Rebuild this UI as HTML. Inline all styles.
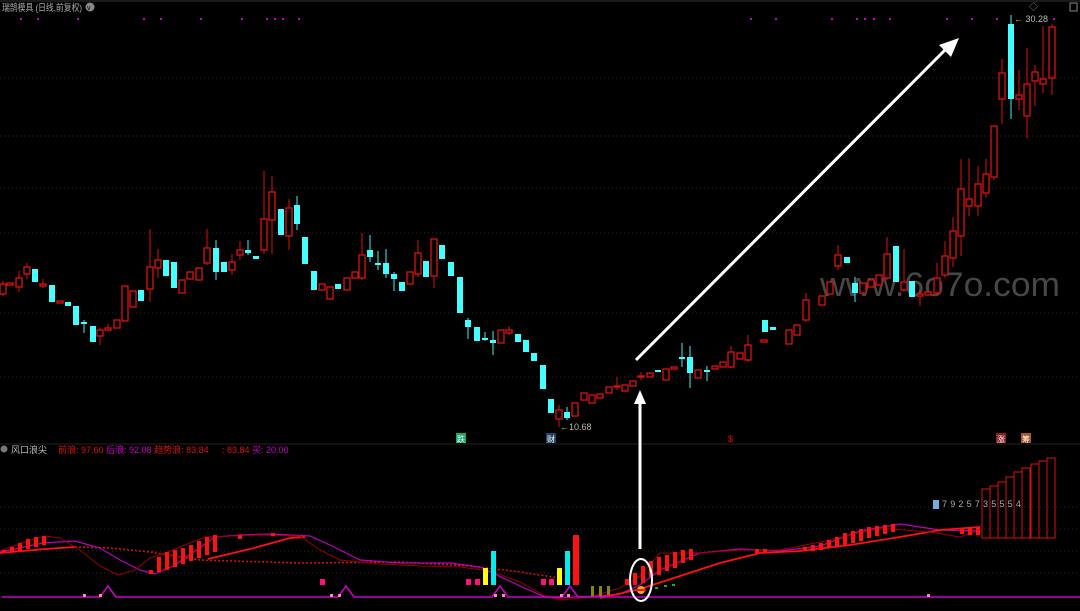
<!DOCTYPE html><html><head><meta charset="utf-8"><style>
body{margin:0;background:#000;width:1080px;height:611px;overflow:hidden;font-family:"Liberation Sans","Noto Sans CJK SC",sans-serif}
svg{position:absolute;left:0;top:0}
</style></head><body>
<svg width="1080" height="611" viewBox="0 0 1080 611">
<rect width="1080" height="611" fill="#000"/>
<line x1="0" y1="1" x2="1080" y2="1" stroke="#333"/>
<g stroke="#2a2a2a" stroke-dasharray="1,3">
<line x1="0" y1="78" x2="1080" y2="78"/><line x1="0" y1="136" x2="1080" y2="136"/><line x1="0" y1="188" x2="1080" y2="188"/><line x1="0" y1="233" x2="1080" y2="233"/><line x1="0" y1="313" x2="1080" y2="313"/><line x1="0" y1="377" x2="1080" y2="377"/>
<line x1="0" y1="507" x2="1080" y2="507"/><line x1="0" y1="529" x2="1080" y2="529"/><line x1="0" y1="551" x2="1080" y2="551"/><line x1="0" y1="573" x2="1080" y2="573"/>
</g>
<line x1="0" y1="444" x2="1080" y2="444" stroke="#222"/>
<text x="2" y="11" fill="#aaa" font-size="9.5" textLength="80" lengthAdjust="spacingAndGlyphs">瑞鹄模具 (日线,前复权)</text>
<circle cx="90" cy="7" r="4.5" fill="#888"/><text x="87" y="10" font-size="7" fill="#000">v</text>
<text x="1029" y="10" fill="#888" font-size="9">◇</text><rect x="1070" y="3" width="7" height="8" fill="none" stroke="#888"/>
<g fill="#c0c">
<rect x="20" y="18" width="2" height="2"/><rect x="37" y="18" width="2" height="2"/><rect x="77" y="18" width="2" height="2"/><rect x="143" y="18" width="2" height="2"/><rect x="160" y="18" width="2" height="2"/><rect x="200" y="18" width="2" height="2"/><rect x="241" y="18" width="2" height="2"/><rect x="266" y="18" width="2" height="2"/><rect x="274" y="18" width="2" height="2"/><rect x="282" y="18" width="2" height="2"/><rect x="298" y="18" width="2" height="2"/><rect x="750" y="18" width="2" height="2"/><rect x="775" y="18" width="2" height="2"/><rect x="831" y="18" width="2" height="2"/><rect x="856" y="18" width="2" height="2"/><rect x="864" y="18" width="2" height="2"/><rect x="873" y="18" width="2" height="2"/><rect x="889" y="18" width="2" height="2"/><rect x="946" y="18" width="2" height="2"/><rect x="971" y="18" width="2" height="2"/><rect x="996" y="18" width="2" height="2"/><rect x="1053" y="18" width="2" height="2"/>
</g>
<text x="820" y="296" fill="#474747" font-size="34" textLength="240" lengthAdjust="spacingAndGlyphs">www.6o7o.com</text>
<g stroke-width="1">
<g stroke="#d11">
<line x1="3" y1="281" x2="3" y2="296"/><line x1="19" y1="271" x2="19" y2="292"/><line x1="27" y1="263" x2="27" y2="279"/><line x1="43" y1="279" x2="43" y2="288"/><line x1="100" y1="328" x2="100" y2="345"/><line x1="108" y1="324" x2="108" y2="331"/><line x1="150" y1="229" x2="150" y2="302"/><line x1="158" y1="249" x2="158" y2="278"/><line x1="207" y1="229" x2="207" y2="265"/><line x1="232" y1="254" x2="232" y2="275"/><line x1="240" y1="241" x2="240" y2="260"/><line x1="264" y1="171" x2="264" y2="254"/><line x1="272" y1="176" x2="272" y2="254"/><line x1="289" y1="199" x2="289" y2="250"/><line x1="362" y1="233" x2="362" y2="280"/><line x1="418" y1="240" x2="418" y2="277"/><line x1="434" y1="239" x2="434" y2="288"/><line x1="509" y1="326" x2="509" y2="335"/><line x1="559" y1="405" x2="559" y2="427"/><line x1="617" y1="377" x2="617" y2="390"/><line x1="641" y1="372" x2="641" y2="380"/><line x1="731" y1="346" x2="731" y2="368"/><line x1="748" y1="335" x2="748" y2="362"/><line x1="806" y1="293" x2="806" y2="322"/><line x1="838" y1="245" x2="838" y2="270"/><line x1="887" y1="237" x2="887" y2="280"/><line x1="904" y1="249" x2="904" y2="292"/><line x1="920" y1="290" x2="920" y2="306"/><line x1="937" y1="263" x2="937" y2="296"/><line x1="945" y1="241" x2="945" y2="278"/><line x1="953" y1="217" x2="953" y2="267"/><line x1="961" y1="159" x2="961" y2="256"/><line x1="969" y1="158" x2="969" y2="216"/><line x1="978" y1="166" x2="978" y2="216"/><line x1="986" y1="159" x2="986" y2="198"/><line x1="994" y1="126" x2="994" y2="180"/><line x1="1002" y1="59" x2="1002" y2="124"/><line x1="1019" y1="70" x2="1019" y2="110"/><line x1="1027" y1="48" x2="1027" y2="138"/><line x1="1035" y1="65" x2="1035" y2="106"/><line x1="1043" y1="26" x2="1043" y2="93"/><line x1="1052" y1="24" x2="1052" y2="95"/>
</g>
<g stroke="#4ee">
<line x1="216" y1="240" x2="216" y2="280"/><line x1="248" y1="240" x2="248" y2="255"/><line x1="297" y1="196" x2="297" y2="230"/><line x1="370" y1="235" x2="370" y2="262"/><line x1="378" y1="251" x2="378" y2="270"/><line x1="386" y1="249" x2="386" y2="278"/><line x1="394" y1="272" x2="394" y2="291"/><line x1="468" y1="318" x2="468" y2="339"/><line x1="485" y1="332" x2="485" y2="341"/><line x1="493" y1="331" x2="493" y2="355"/><line x1="567" y1="407" x2="567" y2="420"/><line x1="682" y1="343" x2="682" y2="367"/><line x1="690" y1="346" x2="690" y2="388"/><line x1="707" y1="366" x2="707" y2="381"/><line x1="855" y1="277" x2="855" y2="302"/><line x1="1011" y1="15" x2="1011" y2="119"/><line x1="84" y1="320" x2="84" y2="333"/>
</g>
</g>
<g fill="#000" stroke="#d11" stroke-width="1.3">
<rect x="0" y="284" width="6" height="10"/><rect x="7" y="283" width="6" height="2"/><rect x="16" y="278" width="6" height="9"/><rect x="24" y="267" width="6" height="7"/><rect x="40" y="284" width="6" height="2"/><rect x="57" y="301" width="6" height="2"/><rect x="97" y="330" width="6" height="6"/><rect x="105" y="328" width="6" height="2"/><rect x="114" y="320" width="6" height="8"/><rect x="122" y="286" width="6" height="35"/><rect x="130" y="291" width="6" height="16"/><rect x="147" y="267" width="6" height="22"/><rect x="155" y="260" width="6" height="8"/><rect x="179" y="280" width="6" height="13"/><rect x="187" y="272" width="6" height="7"/><rect x="196" y="268" width="6" height="12"/><rect x="204" y="248" width="6" height="15"/><rect x="229" y="262" width="6" height="8"/><rect x="237" y="250" width="6" height="5"/><rect x="261" y="219" width="6" height="31"/><rect x="269" y="192" width="6" height="28"/><rect x="286" y="208" width="6" height="28"/><rect x="319" y="284" width="6" height="6"/><rect x="327" y="287" width="6" height="12"/><rect x="344" y="278" width="6" height="12"/><rect x="352" y="272" width="6" height="6"/><rect x="359" y="255" width="6" height="23"/><rect x="407" y="272" width="6" height="12"/><rect x="415" y="253" width="6" height="21"/><rect x="431" y="239" width="6" height="37"/><rect x="498" y="330" width="6" height="13"/><rect x="506" y="330" width="6" height="3"/><rect x="556" y="410" width="6" height="9"/><rect x="572" y="403" width="6" height="13"/><rect x="581" y="393" width="6" height="7"/><rect x="589" y="395" width="6" height="8"/><rect x="597" y="394" width="6" height="4"/><rect x="606" y="387" width="6" height="6"/><rect x="614" y="386" width="6" height="1"/><rect x="622" y="385" width="6" height="6"/><rect x="630" y="381" width="6" height="5"/><rect x="638" y="376" width="6" height="1"/><rect x="647" y="373" width="6" height="4"/><rect x="663" y="369" width="6" height="11"/><rect x="671" y="367" width="6" height="2"/><rect x="695" y="370" width="6" height="8"/><rect x="712" y="366" width="6" height="3"/><rect x="720" y="362" width="6" height="5"/><rect x="728" y="352" width="6" height="15"/><rect x="737" y="353" width="6" height="6"/><rect x="745" y="345" width="6" height="15"/><rect x="761" y="340" width="6" height="2"/><rect x="786" y="330" width="6" height="14"/><rect x="794" y="325" width="6" height="10"/><rect x="803" y="300" width="6" height="20"/><rect x="819" y="296" width="6" height="9"/><rect x="827" y="282" width="6" height="12"/><rect x="835" y="255" width="6" height="11"/><rect x="860" y="283" width="6" height="10"/><rect x="868" y="280" width="6" height="7"/><rect x="876" y="275" width="6" height="10"/><rect x="884" y="254" width="6" height="24"/><rect x="901" y="282" width="6" height="8"/><rect x="917" y="294" width="6" height="2"/><rect x="925" y="292" width="6" height="3"/><rect x="934" y="278" width="6" height="15"/><rect x="942" y="256" width="6" height="19"/><rect x="950" y="231" width="6" height="27"/><rect x="958" y="189" width="6" height="47"/><rect x="966" y="199" width="6" height="7"/><rect x="975" y="184" width="6" height="22"/><rect x="983" y="174" width="6" height="19"/><rect x="991" y="126" width="6" height="51"/><rect x="999" y="73" width="6" height="26"/><rect x="1016" y="95" width="6" height="4"/><rect x="1024" y="84" width="6" height="32"/><rect x="1032" y="72" width="6" height="9"/><rect x="1040" y="79" width="6" height="5"/><rect x="1049" y="27" width="6" height="51"/>
</g>
<g fill="#4ff">
<rect x="32" y="269" width="6" height="13"/><rect x="49" y="285" width="6" height="17"/><rect x="65" y="302" width="6" height="4"/><rect x="73" y="306" width="6" height="19"/><rect x="81" y="322" width="6" height="2"/><rect x="90" y="326" width="6" height="16"/><rect x="138" y="290" width="6" height="11"/><rect x="163" y="260" width="6" height="16"/><rect x="171" y="262" width="6" height="26"/><rect x="213" y="248" width="6" height="24"/><rect x="221" y="262" width="6" height="10"/><rect x="245" y="250" width="6" height="3"/><rect x="253" y="256" width="6" height="3"/><rect x="278" y="209" width="6" height="26"/><rect x="294" y="205" width="6" height="19"/><rect x="302" y="237" width="6" height="27"/><rect x="311" y="271" width="6" height="19"/><rect x="335" y="284" width="6" height="5"/><rect x="367" y="250" width="6" height="7"/><rect x="375" y="263" width="6" height="2"/><rect x="383" y="263" width="6" height="11"/><rect x="391" y="274" width="6" height="5"/><rect x="399" y="282" width="6" height="9"/><rect x="423" y="261" width="6" height="16"/><rect x="439" y="245" width="6" height="14"/><rect x="448" y="262" width="6" height="14"/><rect x="457" y="277" width="6" height="36"/><rect x="465" y="320" width="6" height="7"/><rect x="474" y="327" width="6" height="14"/><rect x="482" y="338" width="6" height="2"/><rect x="490" y="340" width="6" height="3"/><rect x="515" y="334" width="6" height="8"/><rect x="523" y="340" width="6" height="12"/><rect x="531" y="353" width="6" height="8"/><rect x="540" y="365" width="6" height="24"/><rect x="548" y="399" width="6" height="14"/><rect x="564" y="412" width="6" height="6"/><rect x="655" y="370" width="6" height="2"/><rect x="679" y="357" width="6" height="2"/><rect x="687" y="357" width="6" height="16"/><rect x="704" y="370" width="6" height="2"/><rect x="762" y="320" width="6" height="12"/><rect x="770" y="327" width="6" height="3"/><rect x="844" y="257" width="6" height="6"/><rect x="852" y="283" width="6" height="10"/><rect x="893" y="246" width="6" height="36"/><rect x="909" y="281" width="6" height="16"/><rect x="1008" y="24" width="6" height="75"/>
</g>
<text x="560" y="430" fill="#bbb" font-size="9">←10.68</text>
<text x="1014" y="22" fill="#bbb" font-size="9">← 30.28</text>
<line x1="636" y1="360" x2="948" y2="47" stroke="#fff" stroke-width="3"/>
<polygon points="959,38 939,45 951,57" fill="#fff"/>
<line x1="640" y1="549" x2="640" y2="403" stroke="#fff" stroke-width="3"/>
<polygon points="640,390 634,404 646,404" fill="#fff"/>
<rect x="456" y="433" width="10" height="10" fill="#1a6" /><text x="457" y="442" fill="#fff" font-size="8">跌</text>
<rect x="546" y="433" width="10" height="10" fill="#246"/><text x="547" y="442" fill="#fff" font-size="8">财</text>
<text x="728" y="442" fill="#d11" font-size="9">$</text>
<rect x="996" y="433" width="10" height="10" fill="#822"/><text x="997" y="442" fill="#fff" font-size="8">涨</text>
<rect x="1021" y="433" width="10" height="10" fill="#a52"/><text x="1022" y="442" fill="#fff" font-size="8">筹</text>
<circle cx="4" cy="449" r="3.5" fill="#777"/>
<text x="11" y="453" fill="#bbb" font-size="9">风口浪尖</text>
<text x="58" y="453" font-size="9"><tspan fill="#d11">前浪: 97.60 </tspan><tspan fill="#c0c">后浪: 92.08 </tspan><tspan fill="#d11">趋势浪: 83.84</tspan><tspan fill="#d11" x="222">: 83.84 </tspan><tspan fill="#c0c">买: 20.00</tspan></text>
<g fill="none">
<polyline stroke="#d11" stroke-width="1.5" stroke-dasharray="2,2" points="75,547 110,548 150,552 200,560 300,563 400,562 470,566 520,572 560,578"/>
<polyline stroke="#b0b" stroke-width="1.2" points="0,552 43,543 75,541 100,548 120,560 140,570 155,574 175,565 215,537 240,535 270,534 310,536 330,545 360,560 400,563 450,563 480,567 520,586 545,597 560,598 575,597 600,596 620,594 640,585 660,570 700,553 740,549 780,551 820,546 860,531 900,524 940,530 980,531"/>
<polyline stroke="#f11" stroke-width="1.8" points="0,553 45,549 75,547"/>
<polyline stroke="#f11" stroke-width="1.8" points="208,559 250,549 290,538 305,537"/>
<polyline stroke="#f11" stroke-width="1.8" points="600,598 640,589 680,576 720,563 760,553 800,551 850,545 900,537 940,530 980,527"/>
<polyline stroke="#900" stroke-width="1" points="0,551 30,540 45,536 60,538 80,550 100,566 118,575 135,570 150,558 165,553 205,537 260,535 300,536 320,550 340,560 380,564 420,566 460,567 490,571 520,582 545,596 560,600 590,597 620,588 640,576 660,553 700,553 740,550 780,550 830,540 880,528 930,532 960,537 980,530"/>
</g>
<g fill="#f11">
<rect x="2" y="550" width="4" height="3"/><rect x="10" y="547" width="4" height="5"/><rect x="18" y="543" width="4" height="8"/><rect x="26" y="539" width="4" height="10"/><rect x="34" y="537" width="4" height="10"/><rect x="42" y="536" width="4" height="9"/>
<rect x="149" y="570" width="4" height="4"/><rect x="157" y="557" width="4" height="15"/><rect x="165" y="552" width="4" height="18"/><rect x="173" y="550" width="4" height="17"/><rect x="181" y="548" width="4" height="16"/><rect x="189" y="545" width="4" height="16"/><rect x="197" y="541" width="4" height="17"/><rect x="205" y="537" width="4" height="18"/><rect x="213" y="535" width="4" height="17"/>
<rect x="238" y="535" width="4" height="4"/><rect x="271" y="533" width="4" height="3"/>
<rect x="625" y="579" width="4" height="6"/><rect x="633" y="573" width="4" height="12"/><rect x="641" y="566" width="4" height="17"/><rect x="649" y="561" width="4" height="17"/><rect x="657" y="557" width="4" height="18"/><rect x="665" y="555" width="4" height="16"/><rect x="673" y="552" width="4" height="16"/><rect x="681" y="550" width="4" height="13"/><rect x="689" y="549" width="4" height="11"/>
<rect x="755" y="549" width="4" height="4"/><rect x="763" y="549" width="4" height="4"/>
<rect x="803" y="547" width="4" height="4"/><rect x="811" y="545" width="4" height="6"/><rect x="819" y="543" width="4" height="7"/><rect x="827" y="540" width="4" height="8"/><rect x="835" y="537" width="4" height="10"/><rect x="843" y="533" width="4" height="12"/><rect x="851" y="531" width="4" height="12"/><rect x="859" y="529" width="4" height="12"/><rect x="867" y="527" width="4" height="11"/><rect x="875" y="526" width="4" height="10"/><rect x="883" y="525" width="4" height="9"/><rect x="891" y="524" width="4" height="8"/>
<rect x="960" y="529" width="4" height="5"/><rect x="968" y="528" width="4" height="7"/><rect x="976" y="527" width="4" height="8"/>
</g>
<rect x="320" y="579" width="5" height="6" fill="#f17"/>
<rect x="466" y="579" width="5" height="6" fill="#f17"/><rect x="475" y="579" width="5" height="6" fill="#f17"/>
<rect x="483" y="568" width="5" height="17" fill="#ff0"/><rect x="491" y="551" width="5" height="34" fill="#0ee"/>
<rect x="541" y="579" width="5" height="6" fill="#f17"/><rect x="549" y="579" width="5" height="6" fill="#f17"/>
<rect x="557" y="568" width="5" height="17" fill="#ff0"/><rect x="565" y="551" width="5" height="34" fill="#0ee"/>
<rect x="573" y="535" width="6" height="50" fill="#f11"/>
<rect x="591" y="586" width="3" height="11" fill="#880"/><rect x="599" y="586" width="3" height="11" fill="#880"/><rect x="607" y="586" width="3" height="9" fill="#880"/>
<g fill="#2a2"><rect x="655" y="587" width="3" height="2"/><rect x="664" y="585" width="3" height="2"/><rect x="672" y="584" width="3" height="2"/></g>
<polyline fill="none" stroke="#c0c" stroke-width="1.5" points="2,597 100,597 108,586 116,597 338,597 346,586 354,597 492,597 500,586 508,597 562,597 570,586 578,597 1080,597"/>
<g fill="#f8a"><rect x="83" y="594" width="3" height="3"/><rect x="99" y="594" width="3" height="3"/><rect x="330" y="594" width="3" height="3"/><rect x="338" y="594" width="3" height="3"/><rect x="494" y="594" width="3" height="3"/><rect x="502" y="594" width="3" height="3"/><rect x="560" y="594" width="3" height="3"/><rect x="567" y="594" width="3" height="3"/><rect x="927" y="594" width="3" height="3"/></g>
<ellipse cx="641" cy="580" rx="11" ry="21" fill="none" stroke="#fff" stroke-width="2"/>
<circle cx="641" cy="590" r="4" fill="#fa0"/><rect x="636" y="589" width="10" height="2" fill="#f11"/>
<g fill="none" stroke="#d11" stroke-width="1">
<rect x="982" y="489" width="8" height="49"/><rect x="990" y="486" width="8" height="52"/><rect x="998" y="482" width="8" height="56"/><rect x="1006" y="477" width="8" height="61"/><rect x="1014" y="472" width="8" height="66"/><rect x="1022" y="468" width="8" height="70"/><rect x="1031" y="464" width="8" height="74"/><rect x="1039" y="461" width="8" height="77"/><rect x="1047" y="458" width="8" height="80"/>
</g>
<rect x="933" y="500" width="6" height="9" fill="#7ad"/>
<text x="942" y="507" fill="#aaa" font-size="9" letter-spacing="3.2">7925735554</text>
</svg>
</body></html>
